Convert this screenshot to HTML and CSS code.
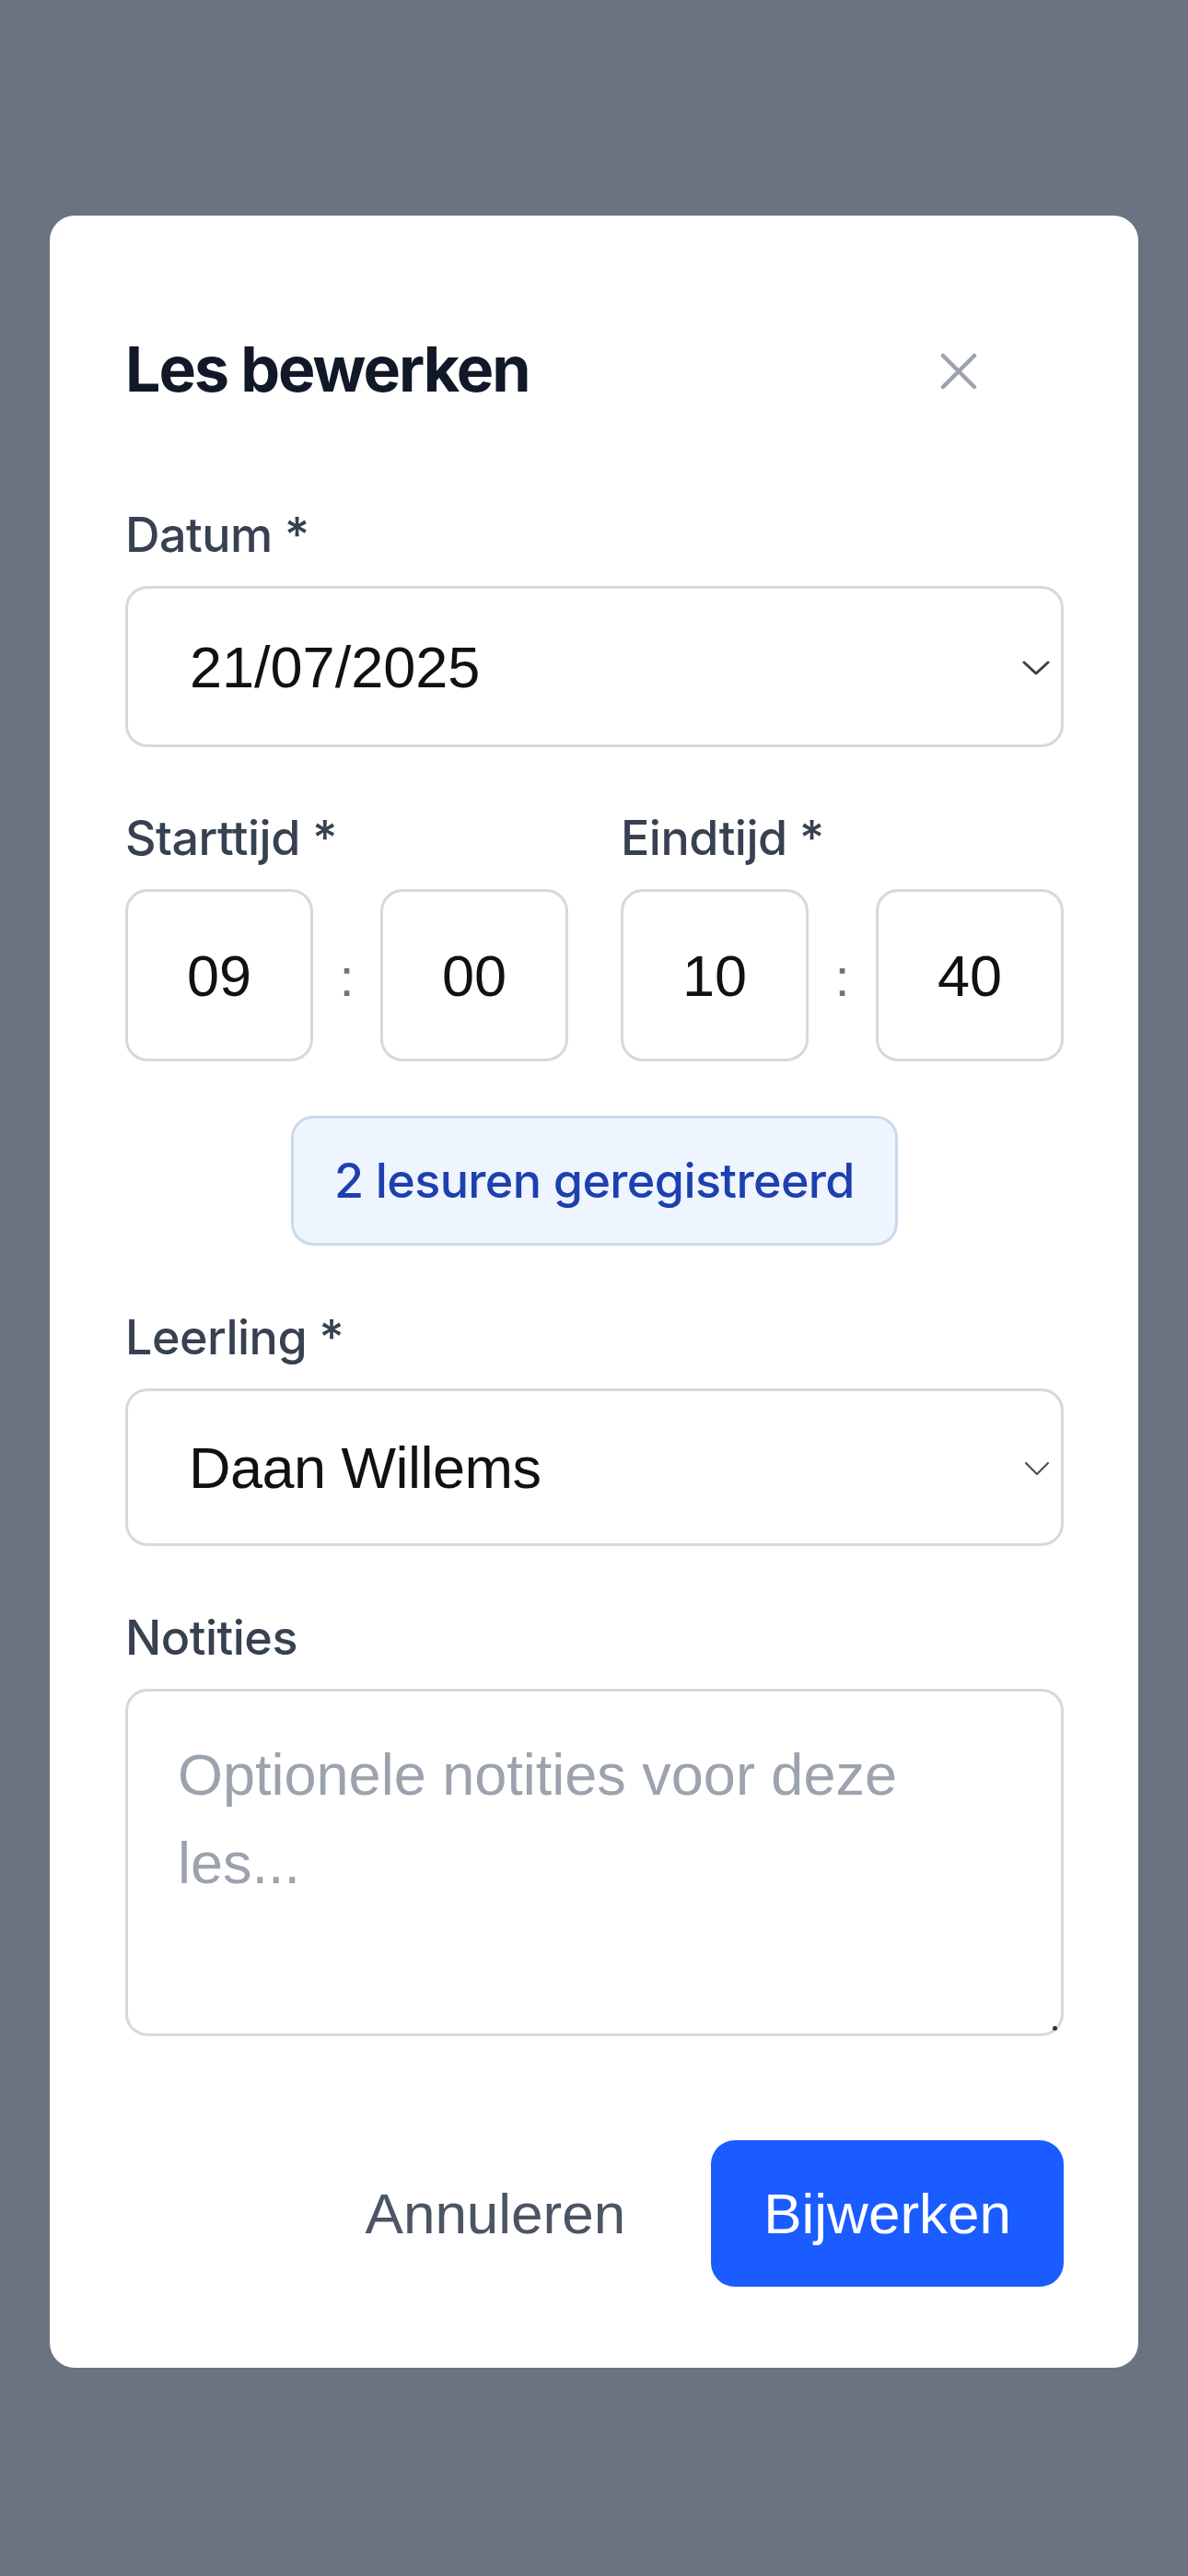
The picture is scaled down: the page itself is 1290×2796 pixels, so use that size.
FILE: index.html
```html
<!DOCTYPE html>
<html lang="nl">
<head>
<meta charset="utf-8">
<title>Les bewerken</title>
<link rel="stylesheet" href="styles.css">
</head>
<body>
<div class="modal">
  <div class="header">
    <h2 class="title">Les bewerken</h2>
    <button class="close" aria-label="Sluiten">
      <svg width="40" height="40" viewBox="0 0 40 40"><path d="M3 3 L37 37 M37 3 L3 37" stroke="#9ca3af" stroke-width="4.5" stroke-linecap="round" fill="none"/></svg>
    </button>
  </div>

  <div class="field">
    <div class="label">Datum *</div>
    <div class="select select-date">
      <span class="value">21/07/2025</span>
      <svg class="chev" width="30" height="16" viewBox="0 0 30 16"><path d="M2 2 L15 14 L28 2" stroke="#3a3f47" stroke-width="3" fill="none" stroke-linecap="round" stroke-linejoin="round"/></svg>
    </div>
  </div>

  <div class="time-grid">
    <div class="time-col">
      <div class="label">Starttijd *</div>
      <div class="time-row">
        <div class="tbox">09</div>
        <div class="colon">:</div>
        <div class="tbox">00</div>
      </div>
    </div>
    <div class="time-col">
      <div class="label">Eindtijd *</div>
      <div class="time-row">
        <div class="tbox">10</div>
        <div class="colon">:</div>
        <div class="tbox">40</div>
      </div>
    </div>
  </div>

  <div class="info-wrap">
    <div class="info">2 lesuren geregistreerd</div>
  </div>

  <div class="field field-gap">
    <div class="label">Leerling *</div>
    <div class="select select-student">
      <span class="value value-student">Daan Willems</span>
      <svg class="chev chev-thin" width="28" height="16" viewBox="0 0 28 16"><path d="M2 2 L14 14 L26 2" stroke="#4b4f57" stroke-width="2.2" fill="none" stroke-linecap="round" stroke-linejoin="round"/></svg>
    </div>
  </div>

  <div class="field field-gap">
    <div class="label">Notities</div>
    <div class="textarea-wrap">
      <textarea class="notes" placeholder="Optionele notities voor deze les..."></textarea>
    </div>
  </div>

  <div class="actions">
    <button class="btn btn-cancel">Annuleren</button>
    <button class="btn btn-primary">Bijwerken</button>
  </div>
</div>
</body>
</html>
```

FILE: styles.css
```css
html, body {
  margin: 0;
  padding: 0;
}
body {
  background: #6b7280;
  min-height: 2796px;
  padding: 234px 54px 0 54px;
  box-sizing: border-box;
  font-family: Inter, "Noto Sans", sans-serif;
}
.modal {
  background: #ffffff;
  border-radius: 27px;
  padding: 118px 81px 88px 82px;
  box-sizing: border-box;
  width: 1182px;
}
.header {
  display: flex;
  align-items: center;
  justify-content: space-between;
  height: 96px;
  margin-bottom: 91px;
}
.title {
  margin: 0;
  font-family: Inter, sans-serif;
  font-weight: 700;
  font-size: 68px;
  line-height: 96px;
  color: #111827;
  letter-spacing: -2px;
}
.close {
  border: 0;
  background: none;
  padding: 0;
  margin: 6px 94px 0 0;
  width: 40px;
  height: 40px;
  display: flex;
}
.label {
  font-family: Inter, sans-serif;
  font-weight: 500;
  font-size: 52px;
  line-height: 84px;
  color: #374151;
  margin-bottom: 13px;
  letter-spacing: -0.5px;
}
.select {
  border: 3px solid #d6d8dc;
  border-radius: 24px;
  box-sizing: border-box;
  display: flex;
  align-items: center;
  justify-content: space-between;
  padding: 0 12px 0 67px;
}
.select-date { height: 175px; }
.select-student { height: 171px; padding-left: 66px; }
.value {
  font-family: "Liberation Sans", Arial, sans-serif;
  font-size: 63px;
  color: #111111;
}
.value-student {
  letter-spacing: -0.5px;
}
.chev { display: block; margin-top: 2px; }
.time-grid {
  display: grid;
  grid-template-columns: 1fr 1fr;
  column-gap: 57px;
  margin-top: 57px;
}
.time-row {
  display: flex;
  align-items: center;
}
.tbox {
  flex: 1;
  height: 187px;
  border: 3px solid #d6d8dc;
  border-radius: 24px;
  box-sizing: border-box;
  display: flex;
  align-items: center;
  justify-content: center;
  font-family: "Liberation Sans", Arial, sans-serif;
  font-size: 63px;
  color: #111111;
}
.colon {
  width: 73px;
  flex: none;
  text-align: center;
  font-family: "Liberation Sans", Arial, sans-serif;
  font-size: 58px;
  color: #6b7280;
  padding-top: 4px;
}
.info-wrap {
  display: flex;
  justify-content: center;
  margin-top: 59px;
}
.info {
  height: 141px;
  box-sizing: border-box;
  padding: 0 44px;
  display: flex;
  align-items: center;
  background: #eef5ff;
  border: 3px solid #cbd9ec;
  border-radius: 24px;
  font-family: Inter, sans-serif;
  font-weight: 500;
  font-size: 52px;
  letter-spacing: -0.6px;
  color: #1e40af;
}
.field-gap { margin-top: 58px; }
.textarea-wrap {
  position: relative;
}
.textarea-wrap::after {
  content: "";
  position: absolute;
  right: 7px;
  bottom: 6px;
  width: 5px;
  height: 5px;
  border-radius: 50%;
  background: #333;
}
.notes {
  display: block;
  width: 100%;
  height: 377px;
  box-sizing: border-box;
  border: 3px solid #d6d8dc;
  border-radius: 24px;
  padding: 42px 54px;
  font-family: "Liberation Sans", Arial, sans-serif;
  font-size: 63px;
  line-height: 96px;
  color: #111;
  resize: none;
  outline: none;
  background: #fff;
}
.notes::placeholder {
  color: #9ca3af;
}
.actions {
  display: flex;
  justify-content: flex-end;
  gap: 36px;
  margin-top: 113px;
}
.btn {
  height: 159px;
  padding: 0 57px;
  border: 0;
  border-radius: 26px;
  font-family: "Liberation Sans", Arial, sans-serif;
  font-size: 62px;
  cursor: pointer;
}
.btn-cancel {
  background: transparent;
  color: #4b5563;
}
.btn-primary {
  background: #1a5cff;
  color: #ffffff;
}
```
